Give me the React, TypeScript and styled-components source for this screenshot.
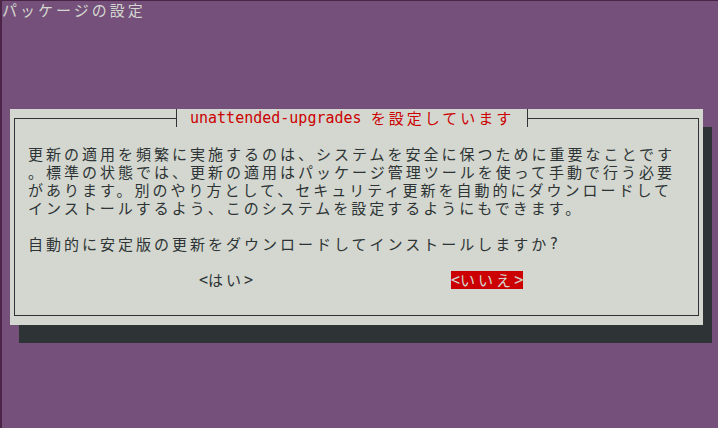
import React from "react";
import styled, { createGlobalStyle } from "styled-components";

const GlobalStyle = createGlobalStyle`
  html, body {
    margin: 0;
    padding: 0;
    background: #75507b;
  }
  body {
    width: 718px;
    height: 428px;
    overflow: hidden;
  }
`;

const Screen = styled.div`
  width: 718px;
  height: 428px;
  box-sizing: border-box;
  background: #75507b;
  border-left: 2px solid #4b2448;
  border-top: 1px solid #4b2448;
  display: flex;
  flex-direction: column;
  align-items: flex-start;
`;

const Ascii = styled.span`
  display: inline-block;
  height: 18px;
  line-height: 18px;
  vertical-align: top;
  font-family: "DejaVu Sans Mono", monospace;
  font-size: 15px;
  letter-spacing: 0;
`;

const Wide = styled.span`
  display: inline-block;
  height: 18px;
  line-height: 17px;
  vertical-align: top;
  font-family: "Noto Sans CJK JP", sans-serif;
  font-size: 15px;
  letter-spacing: 3px;
`;

const PageTitle = styled.div`
  height: 18px;
  line-height: 18px;
  color: #d3d7cf;
  white-space: pre;
`;

const DialogBox = styled.div`
  margin: 90px 0 0 8px;
  width: 693px;
  height: 216px;
  box-sizing: border-box;
  background: #d3d7cf;
  box-shadow: 9px 18px 0 0 #2e3436;
  padding: 9px 4px;
  display: flex;
`;

const Frame = styled.div`
  flex: 1;
  border: 1px solid #2e3436;
  display: flex;
  flex-direction: column;
  align-items: flex-start;
`;

const TitleBar = styled.div`
  margin: -10px 0 0 161px;
  height: 18px;
  box-sizing: border-box;
  border-left: 1px solid #2e3436;
  border-right: 1px solid #2e3436;
  padding: 0 13px;
  background: #d3d7cf;
  color: #cc0000;
  line-height: 18px;
  white-space: pre;
  display: flex;
  align-items: flex-start;
`;

const Body = styled.div`
  padding: 18px 0 0 13px;
  color: #2e3436;
  display: flex;
  flex-direction: column;
`;

const Line = styled.div<{ $blankBefore?: boolean }>`
  height: 18px;
  line-height: 18px;
  white-space: pre;
  margin-top: ${(p) => (p.$blankBefore ? "18px" : "0")};
`;

const ButtonRow = styled.div`
  margin-top: 18px;
  padding-left: 171px;
  display: flex;
  gap: 198px;
  height: 18px;
`;

const Button = styled.div<{ $focused?: boolean }>`
  height: 18px;
  line-height: 18px;
  white-space: pre;
  background: ${(p) => (p.$focused ? "#cc0000" : "transparent")};
  color: ${(p) => (p.$focused ? "#d3d7cf" : "#2e3436")};
`;

const Term: React.FC<{ text: string }> = ({ text }) => {
  const parts = text.match(/[\x00-\x7f]+|[^\x00-\x7f]+/g) || [];
  return (
    <>
      {parts.map((p, i) =>
        /^[\x00-\x7f]+$/.test(p) ? (
          <Ascii key={i}>{p}</Ascii>
        ) : (
          <Wide key={i}>{p}</Wide>
        )
      )}
    </>
  );
};

const paragraph = [
  "更新の適用を頻繁に実施するのは、システムを安全に保つために重要なことです",
  "。標準の状態では、更新の適用はパッケージ管理ツールを使って手動で行う必要",
  "があります。別のやり方として、セキュリティ更新を自動的にダウンロードして",
  "インストールするよう、このシステムを設定するようにもできます。",
];

export default function App() {
  return (
    <>
      <GlobalStyle />
      <Screen>
        <PageTitle>
          <Term text="パッケージの設定" />
        </PageTitle>
        <DialogBox>
          <Frame>
            <TitleBar>
              <Term text="unattended-upgrades を設定しています" />
            </TitleBar>
            <Body>
              {paragraph.map((l, i) => (
                <Line key={i}>
                  <Term text={l} />
                </Line>
              ))}
              <Line $blankBefore>
                <Term text="自動的に安定版の更新をダウンロードしてインストールしますか?" />
              </Line>
              <ButtonRow>
                <Button>
                  <Term text="<はい>" />
                </Button>
                <Button $focused>
                  <Term text="<いいえ>" />
                </Button>
              </ButtonRow>
            </Body>
          </Frame>
        </DialogBox>
      </Screen>
    </>
  );
}
